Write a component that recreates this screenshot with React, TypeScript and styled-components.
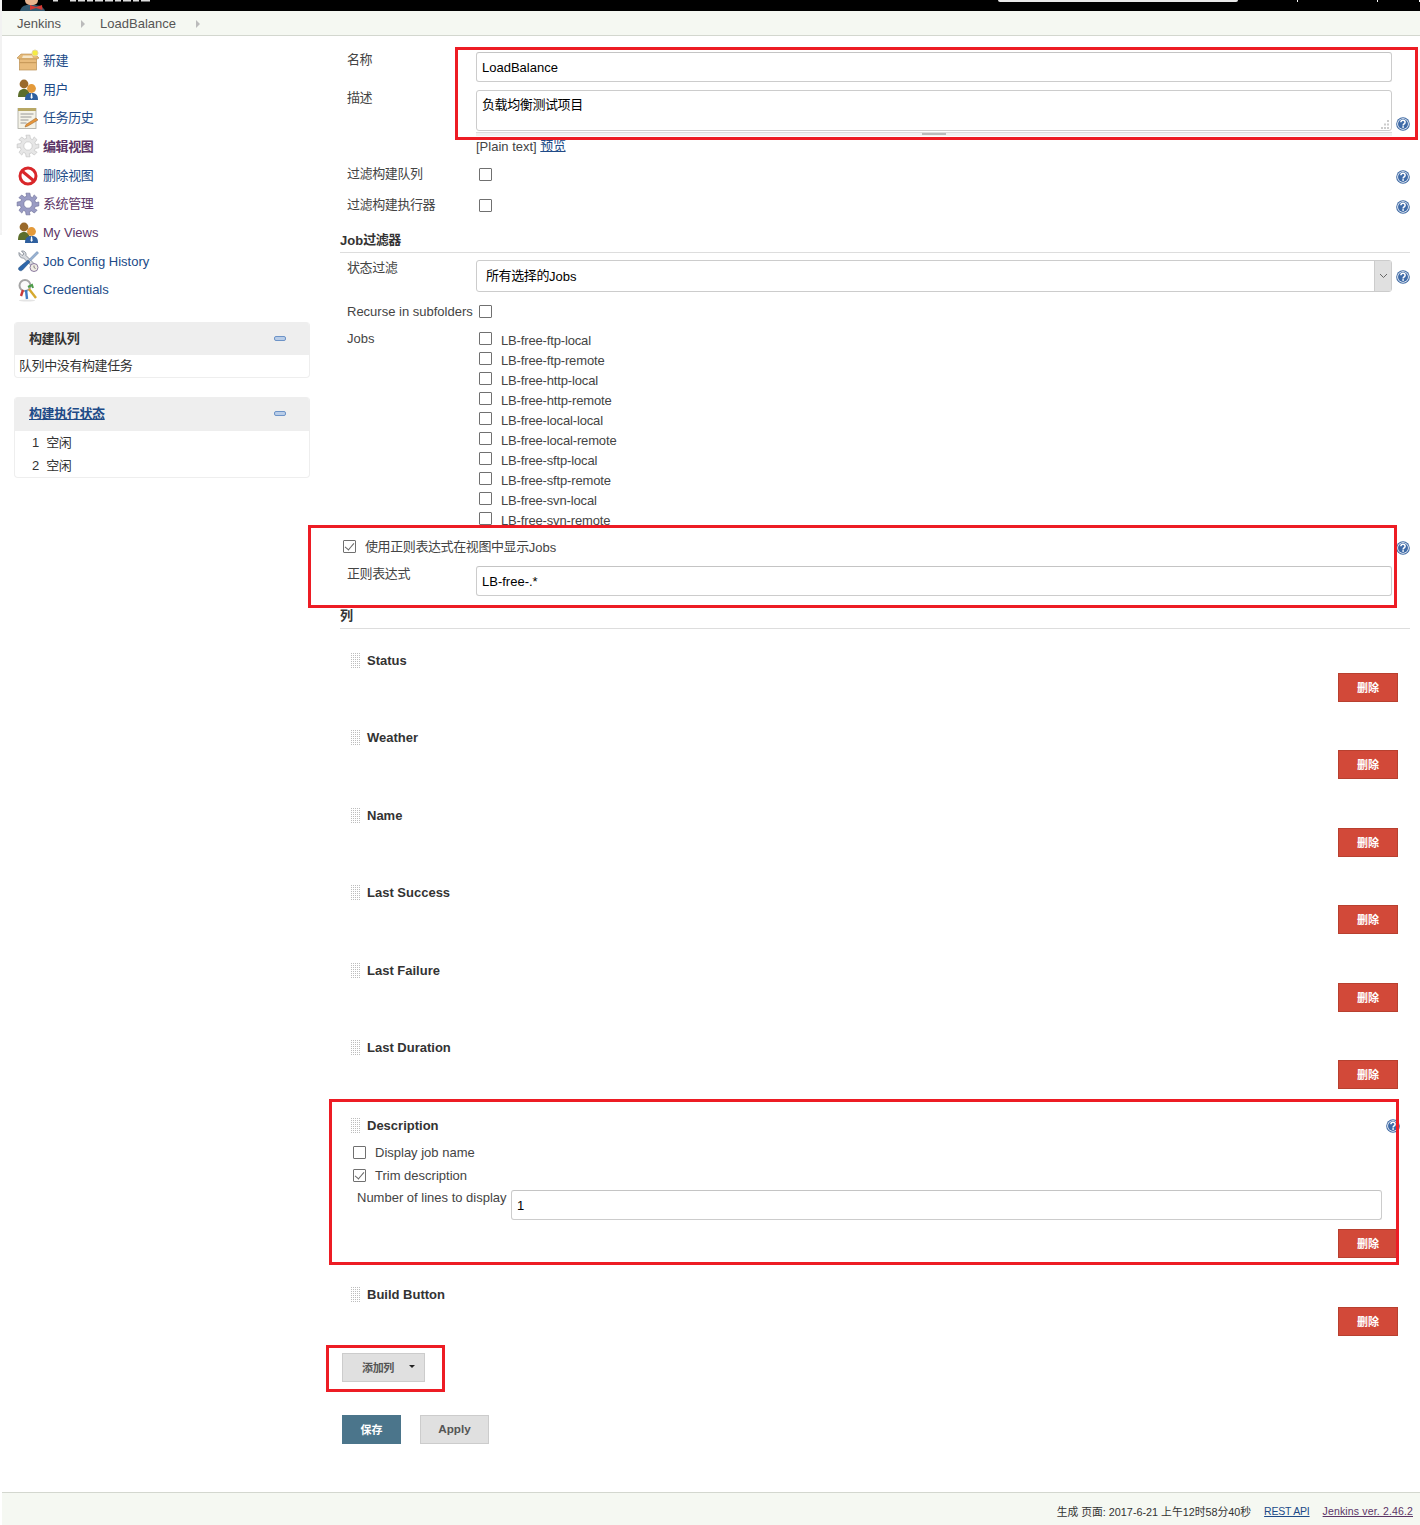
import React from 'react';
import styled, { createGlobalStyle } from 'styled-components';

const LINK = '#204a87';
const VISITED = '#5c3566';

const GlobalStyle = createGlobalStyle`
  html, body { margin: 0; padding: 0; background: #fff; }
  body {
    font-family: "Liberation Sans", "Noto Sans CJK SC", sans-serif;
    font-size: 13px;
    color: #333;
  }
  * { box-sizing: border-box; }
`;

// Chinese runs sit a touch tighter and higher than the fallback font gives by default
const Zh = styled.span`
  display: inline-block;
  letter-spacing: -0.4px;
  text-decoration: inherit;
  transform: translateY(-1px);
`;

// --- page frame ---
const Page = styled.div`
  position: relative;
  width: 1420px;
  min-height: 1525px;
  padding-left: 2px;
  display: flex;
  flex-direction: column;
  overflow: hidden;
`;

const EdgeStrip = styled.div`
  position: absolute;
  left: 0;
  top: 0;
  width: 2px;
  height: 235px;
  background: #f2f2f2;
`;

const Highlight = styled.div<{ $x: number; $y: number; $w: number; $h: number }>`
  position: absolute;
  left: ${p => p.$x}px;
  top: ${p => p.$y}px;
  width: ${p => p.$w}px;
  height: ${p => p.$h}px;
  border: 3px solid #ed1c24;
  pointer-events: none;
`;

const Header = styled.header`
  height: 11px;
  background: #000;
  display: flex;
  align-items: flex-start;
  overflow: hidden;
`;

const HeaderLogo = styled.svg`
  margin-left: 14px;
  flex: none;
`;

const HeaderSearch = styled.div`
  margin-left: auto;
  width: 240px;
  height: 2px;
  background: #e8e8e8;
  border-radius: 0 0 3px 3px;
`;

const HeaderSpeck = styled.span<{ $gap: number }>`
  width: 1px;
  height: 2px;
  margin-left: ${p => p.$gap}px;
  background: #fff;
`;

const Breadcrumb = styled.nav`
  height: 25px;
  padding: 2px 0 0 15px;
  background: #f5f8f2;
  border-bottom: 1px solid #d3d7cf;
  display: flex;
  align-items: center;
  color: #555;
`;

const Crumb = styled.span`
  line-height: 22px;
`;

const CrumbArrow = styled.i`
  width: 0;
  height: 0;
  margin: 0 15px 0 20px;
  border-left: 4px solid #bbb;
  border-top: 4px solid transparent;
  border-bottom: 4px solid transparent;
`;

const Body = styled.div`
  display: flex;
  align-items: flex-start;
`;

// --- left column ---
const Side = styled.aside`
  width: 318px;
  flex: none;
  padding: 10px 10px 0 12px;
`;

const Tasks = styled.ul`
  list-style: none;
  margin: 0 0 17.7px;
  padding: 0 0 0 2px;
`;

const Task = styled.li`
  height: 28.7px;
  display: flex;
  align-items: center;
  gap: 3px;
`;

const TaskIcon = styled.svg`
  width: 24px;
  height: 24px;
  flex: none;
`;

const TaskLink = styled.a<{ $visited?: boolean; $bold?: boolean }>`
  color: ${p => (p.$visited ? VISITED : LINK)};
  font-weight: ${p => (p.$bold ? 700 : 400)};
  text-decoration: none;
`;

const Pane = styled.section`
  width: 296px;
  margin-bottom: 19px;
  border: 1px solid #eee;
  border-top: 0;
  border-radius: 4px;
  overflow: hidden;
`;

const PaneHead = styled.div<{ $h: number }>`
  height: ${p => p.$h}px;
  padding: 0 23px 0 14px;
  background: #eee;
  display: flex;
  align-items: center;
  justify-content: space-between;
  font-weight: 700;
`;

const PaneLink = styled.a`
  color: ${LINK};
  text-decoration: underline;
`;

const Collapse = styled.i`
  width: 12px;
  height: 5px;
  border-radius: 2px;
  background: #b9cde8;
  border: 1px solid #6d93c7;
`;

const PaneEmpty = styled.div`
  height: 22px;
  padding-left: 4px;
  line-height: 24px;
`;

const Executors = styled.div`
  padding-left: 17px;
`;

const Executor = styled.div`
  height: 23px;
  display: flex;
  align-items: center;
  gap: 7px;
`;

// --- form ---
const Main = styled.main`
  width: 1070px;
  margin-left: 20px;
  padding-top: 16px;
`;

const FieldRow = styled.div<{ $top?: number }>`
  margin-top: ${p => p.$top ?? 0}px;
  padding-left: 7px;
  display: grid;
  grid-template-columns: 129px 916px 18px;
`;

const Label = styled.label`
  height: 16px;
  padding-top: 1px;
  line-height: 16px;
  color: #444;
`;

const HelpCell = styled.div<{ $top?: number }>`
  justify-self: end;
  margin-top: ${p => p.$top ?? 0}px;
  height: 0;
`;

const HelpIcon = styled.svg`
  display: block;
  width: 14px;
  height: 14px;
`;

const TextField = styled.input`
  display: block;
  width: 100%;
  height: 30px;
  padding: 0 5px;
  border: 1px solid #ccc;
  border-top-color: #c4c4c4;
  border-radius: 3px;
  background: #fff;
  color: #000;
  font: inherit;
  outline: none;
`;

const TextAreaBox = styled.div`
  position: relative;
`;

const TextArea = styled.div`
  height: 41px;
  padding: 7px 5px;
  border: 1px solid #ccc;
  border-radius: 3px;
  color: #000;
  line-height: 16px;
`;

const ResizeDots = styled.svg`
  position: absolute;
  right: 3px;
  bottom: 2px;
  width: 9px;
  height: 9px;
`;

const Grippie = styled.div`
  height: 4px;
  margin-top: 1px;
  background: #f2f2f2;
  border-top: 1px solid #ddd;
  display: flex;
  justify-content: center;

  &::after {
    content: '';
    width: 24px;
    height: 2px;
    background: #bbb;
  }
`;

const PreviewLine = styled.div`
  margin-top: 3px;
  line-height: 16px;
  color: #444;

  a { color: ${LINK}; text-decoration: underline; }
`;

const CheckBox = styled.input.attrs({ type: 'checkbox', readOnly: true })`
  appearance: none;
  flex: none;
  display: block;
  position: relative;
  width: 13px;
  height: 13px;
  margin: 0;
  border: 1px solid #707070;
  border-radius: 1px;
  background: #fff;

  &:checked::after {
    content: '';
    position: absolute;
    left: 3px;
    top: 0;
    width: 4px;
    height: 8px;
    border: solid #666;
    border-width: 0 1px 1px 0;
    transform: rotate(40deg);
  }
`;

const BoxCell = styled.div`
  padding: 2px 0 0 3px;
`;

const SectionHead = styled.h3<{ $top: number }>`
  height: 21px;
  margin: ${p => p.$top}px 0 0;
  padding-top: 1px;
  border-bottom: 1px solid #ddd;
  font-size: 13px;
  line-height: 16px;
  font-weight: 700;
  color: #333;
`;

const Select = styled.div`
  height: 32px;
  padding: 0 0 2px 9px;
  border: 1px solid #ccc;
  border-radius: 3px;
  display: flex;
  align-items: center;
  justify-content: space-between;
  color: #000;
`;

const SelectArrow = styled.span`
  width: 17px;
  height: 30px;
  margin-bottom: -2px;
  background: #e0e0e0;
  border-left: 1px solid #ccc;
  display: flex;
  align-items: center;
  justify-content: center;
  color: #555;
`;

const JobList = styled.div`
  height: 197px;
  padding: 2px 0 0 3px;
  overflow: hidden;
`;

const JobRow = styled.div`
  height: 20px;
  display: flex;
  align-items: flex-start;
  gap: 9px;
  line-height: 18px;
  color: #444;
  letter-spacing: -0.15px;
`;

const RegexToggle = styled.div`
  margin-top: 11px;
  padding-left: 3px;
  height: 16px;
  display: flex;
  align-items: center;
  gap: 9px;
  color: #444;
`;

const PushRight = styled.div`
  margin: 4px 0 0 auto;
  height: 14px;
`;

// --- columns ---
const ColumnBlock = styled.div`
  padding: 0 12px 0 10px;
  margin-top: 27px;

  &:nth-child(even) { margin-top: 26px; }
  &:first-child { margin-top: 22px; }
`;

const DetailBlock = styled(ColumnBlock)`
  padding-bottom: 1px;
`;

const ColumnTitle = styled.div`
  height: 18px;
  display: flex;
  align-items: center;
  gap: 7px;
  font-weight: 700;
  color: #333;
`;

const Grip = styled.i`
  width: 10px;
  height: 17px;
  flex: none;
  background-image:
    linear-gradient(#fff 1px, transparent 1px),
    linear-gradient(90deg, #fff 1px, transparent 1px);
  background-size: 2px 2px;
  background-color: #bdbdbd;
`;

const ColumnHelp = styled.div`
  margin: 2px -2px 0 auto;
  height: 14px;
`;

const Actions = styled.div<{ $top?: number }>`
  margin-top: ${p => p.$top ?? 4}px;
  display: flex;
  justify-content: flex-end;
`;

const ActionButton = styled.button<{ $kind: 'danger' | 'primary' | 'plain'; $w: number }>`
  width: ${p => p.$w}px;
  height: 29px;
  padding: 0 0 2px;
  border: 1px solid ${p => (p.$kind === 'danger' ? '#b8402f' : p.$kind === 'primary' ? '#4b758b' : '#ccc')};
  background: ${p => (p.$kind === 'danger' ? '#d24939' : p.$kind === 'primary' ? '#4b758b' : '#e0e0e0')};
  color: ${p => (p.$kind === 'plain' ? '#555' : '#fff')};
  font: 700 11px "Liberation Sans", "Noto Sans CJK SC", sans-serif;
  display: flex;
  align-items: center;
  justify-content: center;
`;

const ApplyButton = styled(ActionButton)`
  font-size: 11.7px;
`;

const OptionRow = styled.div<{ $top: number }>`
  margin-top: ${p => p.$top}px;
  padding-left: 3px;
  height: 16px;
  display: flex;
  align-items: center;
  gap: 9px;
  color: #444;
`;

const LinesRow = styled.div`
  margin-top: 7px;
  padding: 0 16px 0 7px;
  display: flex;
`;

const LinesLabel = styled.label`
  width: 154px;
  flex: none;
  line-height: 16px;
  color: #444;
  white-space: nowrap;
`;

const AddRow = styled.div`
  margin-top: 17px;
  padding-left: 2px;
`;

const AddButton = styled(ActionButton)`
  gap: 15px;
  padding-left: 10px;
  letter-spacing: -0.3px;
`;

const Caret = styled.i`
  width: 0;
  height: 0;
  border-top: 3.5px solid #222;
  border-left: 3.5px solid transparent;
  border-right: 3.5px solid transparent;
`;

const SubmitRow = styled.div`
  margin-top: 33px;
  padding-left: 2px;
  display: flex;
  gap: 19px;
`;

const Footer = styled.footer`
  margin-top: auto;
  height: 33px;
  padding: 3px 7px 0 0;
  background: #f5f8f2;
  border-top: 1px solid #d3d7cf;
  display: flex;
  align-items: center;
  justify-content: flex-end;
  gap: 13px;
  font-size: 10.5px;
  color: #333;
`;

const FooterStamp = styled.span`
  font-size: 10.8px;
`;

const FooterLink = styled.a<{ $visited?: boolean }>`
  color: ${p => (p.$visited ? VISITED : LINK)};
  text-decoration: underline;
  letter-spacing: ${p => (p.$visited ? 0.15 : -0.2)}px;
`;

// --- drawings ---
const gearPath = (cx: number, cy: number, outer: number, inner: number, teeth: number) => {
  const pts: string[] = [];
  const step = (Math.PI * 2) / teeth;
  for (let i = 0; i < teeth; i++) {
    const a = i * step;
    const corners: [number, number][] = [
      [a - 0.24 * step, outer],
      [a + 0.22 * step, outer],
      [a + 0.4 * step, inner],
      [a + 0.8 * step, inner],
    ];
    corners.forEach(([t, r]) => {
      pts.push(`${(cx + Math.cos(t) * r).toFixed(2)} ${(cy + Math.sin(t) * r).toFixed(2)}`);
    });
  }
  return `M${pts.join('L')}Z`;
};

const PackageIcon = () => (
  <TaskIcon viewBox="0 0 24 24">
    <path d="M1 10 L5 6 H19 L23 10 L19 12 H5Z" fill="#e4b877" stroke="#b98b4a" strokeWidth=".6" />
    <rect x="3.500" y="11" width="17" height="11" fill="#e9bc7c" stroke="#bb9053" strokeWidth=".7" />
    <rect x="3.500" y="14" width="17" height="1.200" fill="#c99b5b" />
    <path d="M7 7.500h9l1 2.500H6Z" fill="#f6e6c8" />
    <circle cx="19" cy="5" r="3" fill="#f5ec42" stroke="#e6d9a0" strokeWidth="1" />
  </TaskIcon>
);

const UsersIcon = () => (
  <TaskIcon viewBox="0 0 24 24">
    <circle cx="8" cy="7" r="4.400" fill="#9a6a2b" />
    <path d="M2 20c0-6 2.500-8 6-8s6 2 6 8Z" fill="#5c6e2b" />
    <circle cx="15.500" cy="11.500" r="4.400" fill="#e49a3a" />
    <path d="M9 23c0-5.500 2.500-7 6.500-7s6.500 1.500 6.500 7Z" fill="#2e5f9e" />
    <path d="M15 16.500h1l.6 4-1 1.500-1-1.500Z" fill="#fff" />
  </TaskIcon>
);

const NotepadIcon = () => (
  <TaskIcon viewBox="0 0 24 24">
    <rect x="2" y="2.500" width="18" height="20" fill="#f5f3e8" stroke="#a9a9a0" strokeWidth=".8" />
    <rect x="2" y="2" width="18" height="3" fill="#b8a866" />
    <path d="M4.500 8h13M4.500 11h11M4.500 14h8M4.500 17h6" stroke="#8f8f8f" strokeWidth=".9" />
    <path d="M10 18.500l10-6.500 2 2-10 6-3 1Z" fill="#e8963a" stroke="#94622a" strokeWidth=".5" />
  </TaskIcon>
);

const GearIcon = ({ fill, stroke }: { fill: string; stroke: string }) => (
  <TaskIcon viewBox="0 0 24 24">
    <path d={gearPath(12, 12, 11, 7.800, 8)} fill={fill} stroke={stroke} strokeWidth=".7" />
    <circle cx="12" cy="12" r="4.200" fill="#fff" stroke={stroke} strokeWidth=".7" />
  </TaskIcon>
);

const BlockedIcon = () => (
  <TaskIcon viewBox="0 0 24 24">
    <circle cx="12" cy="13" r="8" fill="#fff" stroke="#d9272a" strokeWidth="3" />
    <path d="M6 8l12 10" stroke="#d9272a" strokeWidth="3" />
  </TaskIcon>
);

const ToolsIcon = () => (
  <TaskIcon viewBox="0 0 24 24">
    <path d="M3 3.500l3 3 2-1.500-2.500-3c3-.5 5 1.500 4.500 4.500l11 11-2.500 2.500-11-11C5 9.500 2.500 7 3 3.500Z" fill="#d8dbe0" stroke="#6c7480" strokeWidth=".7" />
    <path d="M21 2.500l1.500 1.500-8 8-1.500-1.500Z" fill="#9ab4d4" stroke="#51729c" strokeWidth=".5" />
    <path d="M12 11l2 2-7.500 8c-1 1-2.500 1-3.500 0s-.5-2 .5-3Z" fill="#2d67ab" stroke="#1f4674" strokeWidth=".5" />
    <circle cx="18" cy="18.500" r="4" fill="#f0ece4" stroke="#8b7aa0" strokeWidth="1" />
    <path d="M18 16.500v2l1.500 1" stroke="#555" strokeWidth=".7" fill="none" />
  </TaskIcon>
);

const KeysIcon = () => (
  <TaskIcon viewBox="0 0 24 24">
    <circle cx="9" cy="7.500" r="5.500" fill="#fbfbfb" stroke="#a5a5a5" strokeWidth="2" />
    <path d="M13 11l7 9" stroke="#d6a92e" strokeWidth="2.400" />
    <path d="M10 12l1 9" stroke="#3f79c4" strokeWidth="2.400" />
    <path d="M7 12l-2 6" stroke="#c93a3a" strokeWidth="2.400" />
    <path d="M12 9l4-2 1 3" stroke="#4d9c49" strokeWidth="2" fill="none" />
    <ellipse cx="11" cy="22.500" rx="8" ry="1" fill="#e4e4e4" />
  </TaskIcon>
);

const Help = () => (
  <HelpIcon viewBox="0 0 14 14">
    <circle cx="7" cy="7" r="6.800" fill="#3c68a3" />
    <circle cx="7" cy="7" r="5.800" fill="#fff" />
    <circle cx="7" cy="7" r="5" fill="#3f6ba8" />
    <path d="M4.900 5.300C4.900 4 5.900 3.200 7 3.200s2.100.8 2.100 2c0 1.600-2 1.600-2 3.200" fill="none" stroke="#fff" strokeWidth="1.500" />
    <rect x="6.300" y="9.200" width="1.600" height="1.600" fill="#fff" />
  </HelpIcon>
);

const Chevron = () => (
  <svg width="9" height="6" viewBox="0 0 9 6">
    <path d="M1 1l3.500 3.500L8 1" fill="none" stroke="#666" strokeWidth="1" />
  </svg>
);

// --- data ---
const tasks = [
  { icon: <PackageIcon />, text: '新建', zh: true },
  { icon: <UsersIcon />, text: '用户', zh: true },
  { icon: <NotepadIcon />, text: '任务历史', zh: true },
  { icon: <GearIcon fill="#e6e6e6" stroke="#c4c4c4" />, text: '编辑视图', zh: true, visited: true, bold: true },
  { icon: <BlockedIcon />, text: '删除视图', zh: true },
  { icon: <GearIcon fill="#9a9cc4" stroke="#72749c" />, text: '系统管理', zh: true, visited: true },
  { icon: <UsersIcon />, text: 'My Views', visited: true },
  { icon: <ToolsIcon />, text: 'Job Config History' },
  { icon: <KeysIcon />, text: 'Credentials' },
];

const jobs = [
  'LB-free-ftp-local',
  'LB-free-ftp-remote',
  'LB-free-http-local',
  'LB-free-http-remote',
  'LB-free-local-local',
  'LB-free-local-remote',
  'LB-free-sftp-local',
  'LB-free-sftp-remote',
  'LB-free-svn-local',
  'LB-free-svn-remote',
];

const columnsBefore = ['Status', 'Weather', 'Name', 'Last Success', 'Last Failure', 'Last Duration'];

const DeleteButton = () => (
  <ActionButton type="button" $kind="danger" $w={60}>删除</ActionButton>
);

const App = () => (
  <Page>
    <GlobalStyle />
    <EdgeStrip />
    <Header>
      <HeaderLogo width="140" height="11" viewBox="0 0 140 11">
        <path d="M4 11c1-4 4-6 8-6h6c5 0 10 2 11 6Z" fill="#33586e" />
        <path d="M9 0h13c0 3-2 5-6.500 5S9 3 9 0Z" fill="#e8b48e" />
        <path d="M14 5l6 2 6-2 .5 5-6.500-2-6 2Z" fill="#d33833" />
        <path d="M37 .5h5M54 .5h6M62 .5h7M71 .5h6M79 .5h8M89 .5h8M99 .5h6M107 .5h8M117 .5h6M125 .5h9" stroke="#ddd" strokeWidth="2" />
      </HeaderLogo>
      <HeaderSearch />
      <HeaderSpeck $gap={59} />
      <HeaderSpeck $gap={79} />
      <HeaderSpeck $gap={41} />
    </Header>
    <Breadcrumb>
      <Crumb>Jenkins</Crumb>
      <CrumbArrow />
      <Crumb>LoadBalance</Crumb>
      <CrumbArrow />
    </Breadcrumb>

    <Body>
      <Side>
        <Tasks>
          {tasks.map(t => (
            <Task key={t.text}>
              {t.icon}
              <TaskLink $visited={t.visited} $bold={t.bold}>{t.zh ? <Zh>{t.text}</Zh> : t.text}</TaskLink>
            </Task>
          ))}
        </Tasks>
        <Pane>
          <PaneHead $h={33}><Zh>构建队列</Zh><Collapse /></PaneHead>
          <PaneEmpty><Zh>队列中没有构建任务</Zh></PaneEmpty>
        </Pane>
        <Pane>
          <PaneHead $h={34}><PaneLink><Zh>构建执行状态</Zh></PaneLink><Collapse /></PaneHead>
          <Executors>
            <Executor><span>1</span><Zh>空闲</Zh></Executor>
            <Executor><span>2</span><Zh>空闲</Zh></Executor>
          </Executors>
        </Pane>
      </Side>

      <Main>
        <FieldRow>
          <Label><Zh>名称</Zh></Label>
          <TextField defaultValue="LoadBalance" />
        </FieldRow>
        <FieldRow $top={8}>
          <Label><Zh>描述</Zh></Label>
          <div>
            <TextAreaBox>
              <TextArea><Zh>负载均衡测试项目</Zh></TextArea>
              <ResizeDots viewBox="0 0 9 9">
                <path d="M7 0h2v2H7ZM4 3.500h2v2H4ZM7 3.500h2v2H7ZM1 7h2v2H1ZM4 7h2v2H4ZM7 7h2v2H7Z" fill="#ccc" />
              </ResizeDots>
            </TextAreaBox>
            <Grippie />
            <PreviewLine>[Plain text] <a><Zh>预览</Zh></a></PreviewLine>
          </div>
          <HelpCell $top={27}><Help /></HelpCell>
        </FieldRow>
        <FieldRow $top={11}>
          <Label><Zh>过滤构建队列</Zh></Label>
          <BoxCell><CheckBox /></BoxCell>
          <HelpCell $top={4}><Help /></HelpCell>
        </FieldRow>
        <FieldRow $top={15}>
          <Label><Zh>过滤构建执行器</Zh></Label>
          <BoxCell><CheckBox /></BoxCell>
          <HelpCell $top={3}><Help /></HelpCell>
        </FieldRow>

        <SectionHead $top={19}>Job<Zh>过滤器</Zh></SectionHead>
        <FieldRow $top={7}>
          <Label><Zh>状态过滤</Zh></Label>
          <Select>
            <span><Zh>所有选择的</Zh>Jobs</span>
            <SelectArrow><Chevron /></SelectArrow>
          </Select>
          <HelpCell $top={10}><Help /></HelpCell>
        </FieldRow>
        <FieldRow $top={11}>
          <Label>Recurse in subfolders</Label>
          <BoxCell><CheckBox /></BoxCell>
        </FieldRow>
        <FieldRow $top={11}>
          <Label>Jobs</Label>
          <JobList>
            {jobs.map(job => (
              <JobRow key={job}>
                <CheckBox />
                <span>{job}</span>
              </JobRow>
            ))}
          </JobList>
        </FieldRow>

        <RegexToggle>
          <CheckBox defaultChecked />
          <span><Zh>使用正则表达式在视图中显示</Zh>Jobs</span>
          <PushRight><Help /></PushRight>
        </RegexToggle>
        <FieldRow $top={12}>
          <Label><Zh>正则表达式</Zh></Label>
          <TextField defaultValue="LB-free-.*" />
        </FieldRow>

        <SectionHead $top={12}><Zh>列</Zh></SectionHead>
        <div>
          {columnsBefore.map(name => (
            <ColumnBlock key={name}>
              <ColumnTitle><Grip />{name}</ColumnTitle>
              <Actions><DeleteButton /></Actions>
            </ColumnBlock>
          ))}
          <DetailBlock>
            <ColumnTitle>
              <Grip />Description
              <ColumnHelp><Help /></ColumnHelp>
            </ColumnTitle>
            <OptionRow $top={10}><CheckBox />Display job name</OptionRow>
            <OptionRow $top={7}><CheckBox defaultChecked />Trim description</OptionRow>
            <LinesRow>
              <LinesLabel>Number of lines to display</LinesLabel>
              <TextField defaultValue="1" />
            </LinesRow>
            <Actions $top={9}><DeleteButton /></Actions>
          </DetailBlock>
          <ColumnBlock>
            <ColumnTitle><Grip />Build Button</ColumnTitle>
            <Actions><DeleteButton /></Actions>
          </ColumnBlock>
        </div>

        <AddRow>
          <AddButton type="button" $kind="plain" $w={83}>添加列<Caret /></AddButton>
        </AddRow>
        <SubmitRow>
          <ActionButton type="button" $kind="primary" $w={59}>保存</ActionButton>
          <ApplyButton type="button" $kind="plain" $w={69}>Apply</ApplyButton>
        </SubmitRow>
      </Main>
    </Body>

    <Footer>
      <FooterStamp>生成 页面: 2017-6-21 上午12时58分40秒</FooterStamp>
      <FooterLink>REST API</FooterLink>
      <FooterLink $visited>Jenkins ver. 2.46.2</FooterLink>
    </Footer>

    <Highlight $x={455} $y={47} $w={963} $h={93} />
    <Highlight $x={308} $y={525} $w={1089} $h={83} />
    <Highlight $x={329} $y={1099} $w={1070} $h={166} />
    <Highlight $x={326} $y={1345} $w={119} $h={47} />
  </Page>
);

export default App;
